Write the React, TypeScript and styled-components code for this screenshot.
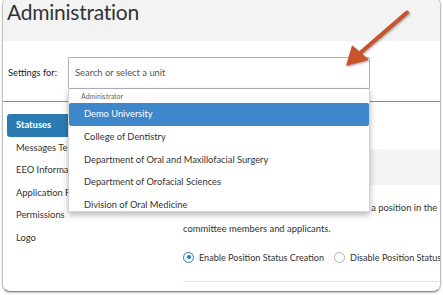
import React from "react";
import styled, { createGlobalStyle } from "styled-components";

const Global = createGlobalStyle`
  html, body { margin: 0; padding: 0; background: #ffffff; }
  body { font-family: Lato, "Open Sans", "Liberation Sans", sans-serif; color: #333; overflow: hidden; }
  * { box-sizing: border-box; }
`;

const Page = styled.div`
  position: relative;
  width: 443px;
  height: 295px;
  overflow: hidden;
  background: #fff;
`;

const Frame = styled.div`
  margin: -3px 0 0 2px;
  width: 439px;
  height: 295px;
  border: 1px solid #c2c2c2;
  border-bottom-color: #8a8a8a;
  border-radius: 8px;
  box-shadow: 0 1px 2px rgba(0, 0, 0, 0.25);
  overflow: hidden;
  display: flex;
  flex-direction: column;
  background: #fff;
`;

const Header = styled.div`
  height: 43px;
  flex: none;
  background: #f3f3f3;
  padding: 3px 0 0 4px;
`;

const Title = styled.h1`
  margin: 0;
  font-family: Lato, "Open Sans", sans-serif;
  font-weight: 400;
  font-size: 21px;
  letter-spacing: -0.25px;
  line-height: 22px;
  color: #333;
`;

const SettingsBand = styled.div`
  height: 61px;
  flex: none;
  border-bottom: 1px solid #8c8c8c;
  display: flex;
  align-items: flex-start;
  padding: 16px 0 0 5px;
  position: relative;
  z-index: 2;
`;

const Label = styled.span`
  width: 60px;
  flex: none;
  height: 32px;
  line-height: 32px;
  font-size: 9.3px;
  color: #222;
`;

const InputWrap = styled.div`
  position: relative;
  width: 302px;
  height: 32px;
`;

const Input = styled.div`
  height: 32px;
  border: 1px solid #a8b2c1;
  border-radius: 1px;
  padding-left: 6px;
  font-size: 9.4px;
  line-height: 30px;
  color: #555;
  background: #fff;
`;

const Dropdown = styled.div`
  position: absolute;
  top: 100%;
  left: 0;
  right: 0;
  height: 123px;
  background: #fff;
  border: 1px solid #d5d5d5;
  border-top: none;
  box-shadow: 0 3px 6px rgba(0, 0, 0, 0.28);
  overflow: hidden;
`;

const GroupHead = styled.div`
  height: 14px;
  line-height: 14px;
  padding-left: 12px;
  font-size: 7px;
  color: #666;
`;

const Option = styled.div<{ $active?: boolean }>`
  height: 22.75px;
  line-height: 22.75px;
  padding-left: 15px;
  font-size: 9.3px;
  color: ${(p) => (p.$active ? "#fff" : "#333")};
  background: ${(p) => (p.$active ? "#3d87ca" : "transparent")};
  border-radius: ${(p) => (p.$active ? "2px" : "0")};
  white-space: nowrap;
`;

const Body = styled.div`
  flex: 1;
  display: flex;
  min-height: 0;
`;

const Sidebar = styled.div`
  width: 140px;
  flex: none;
  padding: 12px 0 0 4px;
  display: flex;
  flex-direction: column;
`;

const NavItem = styled.div<{ $active?: boolean }>`
  height: 22.5px;
  line-height: 22.5px;
  padding-left: 9px;
  font-size: 9.4px;
  white-space: nowrap;
  color: ${(p) => (p.$active ? "#fff" : "#333")};
  background: ${(p) => (p.$active ? "#2b7bb2" : "transparent")};
  border-radius: 3px 0 0 3px;
  font-weight: ${(p) => (p.$active ? 700 : 400)};
`;

const Content = styled.div`
  flex: 1;
  min-width: 0;
  display: flex;
  flex-direction: column;
`;

const TopSpace = styled.div`
  height: 47px;
  flex: none;
`;

const GrayBand = styled.div`
  height: 36px;
  flex: none;
  background: #f4f4f4;
`;

const Section = styled.div`
  padding: 11.5px 0 0 40px;
`;

const Para = styled.p`
  margin: 0;
  font-size: 9.4px;
  line-height: 21px;
  color: #333;
  white-space: nowrap;
`;

const RadioRow = styled.div`
  display: flex;
  align-items: center;
  height: 20px;
  margin-top: 8.5px;
  white-space: nowrap;
`;

const RadioOption = styled.label`
  display: flex;
  align-items: center;
  gap: 5px;
  font-size: 9.1px;
  color: #333;
  margin-right: 10px;
`;

const RadioDot = styled.span<{ $on?: boolean }>`
  width: 11px;
  height: 11px;
  border-radius: 50%;
  border: 1.5px solid ${(p) => (p.$on ? "#2c7cc1" : "#b3b3b3")};
  display: flex;
  align-items: center;
  justify-content: center;
  flex: none;
  &::after {
    content: "";
    width: 4px;
    height: 4px;
    border-radius: 50%;
    background: ${(p) => (p.$on ? "#2c7cc1" : "transparent")};
  }
`;

const Rule = styled.div`
  margin: 14px 0 0 40px;
  height: 1px;
  background: #e6e6e6;
`;

const ArrowLayer = styled.svg`
  position: absolute;
  left: 0;
  top: 0;
  pointer-events: none;
  z-index: 5;
  filter: drop-shadow(1px 1.5px 1px rgba(0, 0, 0, 0.35));
`;

export default function App() {
  const units = [
    "Demo University",
    "College of Dentistry",
    "Department of Oral and Maxillofacial Surgery",
    "Department of Orofacial Sciences",
    "Division of Oral Medicine",
  ];
  const nav = ["Statuses", "Messages Templates", "EEO Information", "Application Fields", "Permissions", "Logo"];
  return (
    <Page>
      <Global />
      <Frame>
        <Header>
          <Title>Administration</Title>
        </Header>
        <SettingsBand>
          <Label>Settings for:</Label>
          <InputWrap>
            <Input>Search or select a unit</Input>
            <Dropdown>
              <GroupHead>Administrator</GroupHead>
              {units.map((u, i) => (
                <Option key={u} $active={i === 0}>
                  {u}
                </Option>
              ))}
            </Dropdown>
          </InputWrap>
        </SettingsBand>
        <Body>
          <Sidebar>
            {nav.map((n, i) => (
              <NavItem key={n} $active={i === 0}>
                {n}
              </NavItem>
            ))}
          </Sidebar>
          <Content>
            <TopSpace />
            <GrayBand />
            <Section>
              <Para>Position statuses indicate the current state of a position in the search process for</Para>
              <Para>committee members and applicants.</Para>
              <RadioRow>
                <RadioOption>
                  <RadioDot $on />
                  Enable Position Status Creation
                </RadioOption>
                <RadioOption>
                  <RadioDot />
                  Disable Position Status Creation
                </RadioOption>
              </RadioRow>
            </Section>
            <Rule />
          </Content>
        </Body>
      </Frame>
      <ArrowLayer width="443" height="295" viewBox="0 0 443 295">
        <line x1="407" y1="12.5" x2="359" y2="54" stroke="#c9532b" strokeWidth="4" strokeLinecap="round" />
        <polygon points="347,65 352.5,46.5 367.5,59.5" fill="#c9532b" stroke="#c9532b" strokeWidth="1.5" strokeLinejoin="round" />
      </ArrowLayer>
    </Page>
  );
}
